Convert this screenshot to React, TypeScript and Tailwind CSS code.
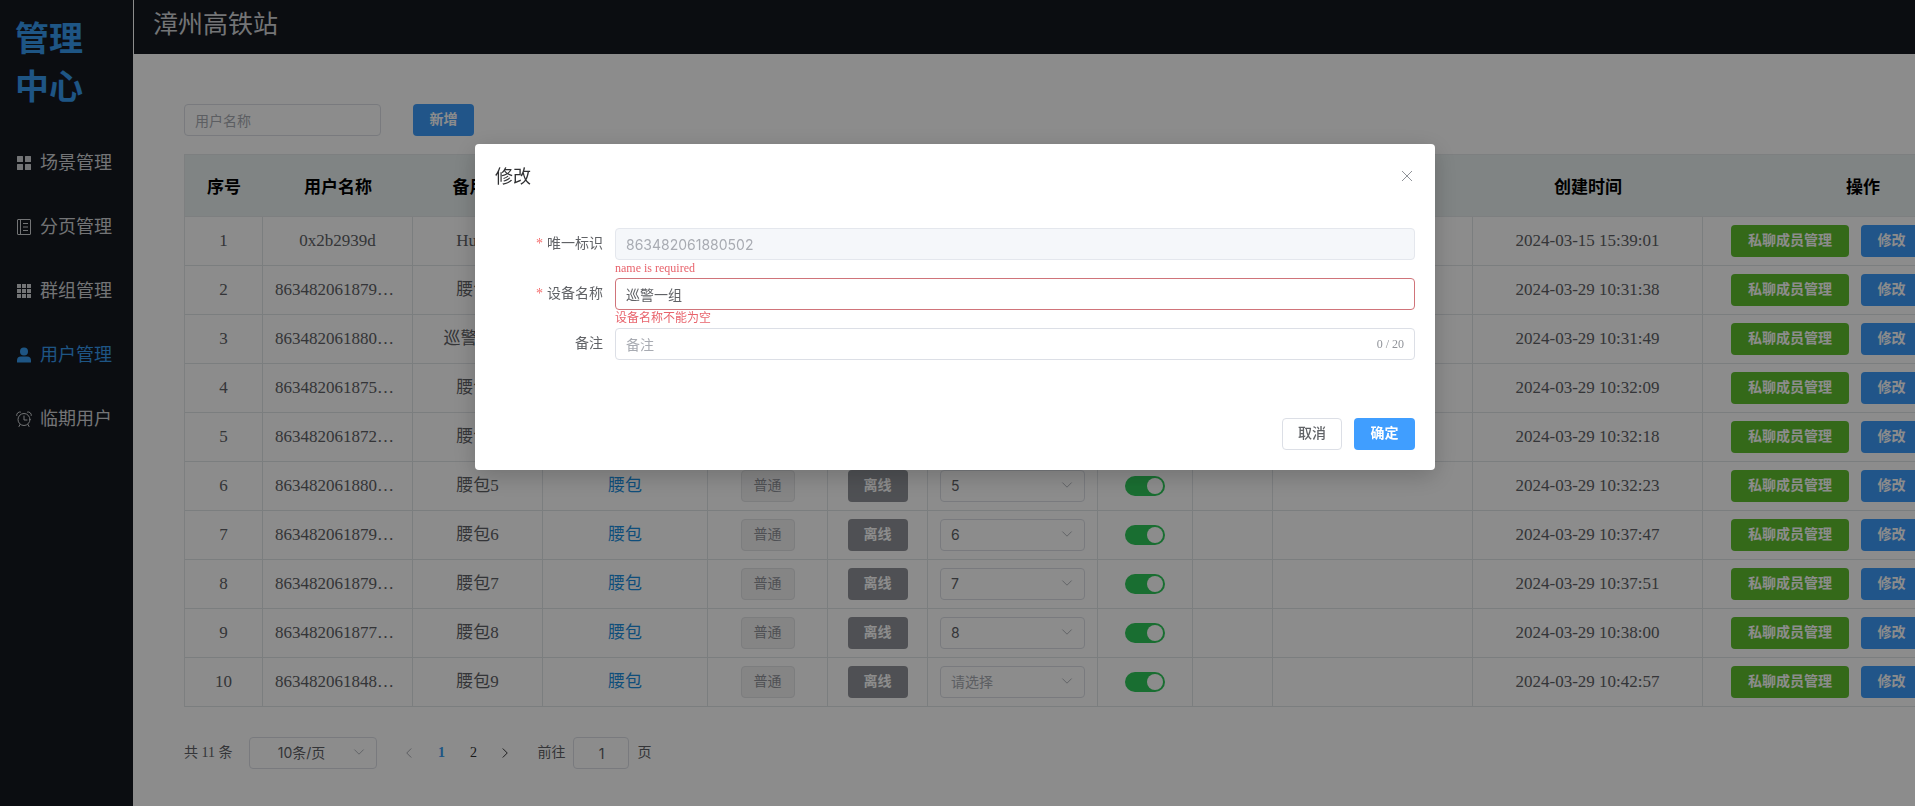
import { useState } from "react";
import type { ReactNode } from "react";

const serif = "font-['Liberation_Serif','Noto_Sans_CJK_SC',serif]";
const sans = "font-['Inter','Noto_Sans_CJK_SC',sans-serif]";

function Svg({ children, className }: { children: ReactNode; className: string }) {
  return (
    <svg viewBox="0 0 16 16" className={className} aria-hidden="true">
      {children}
    </svg>
  );
}

const line = { fill: "none", stroke: "currentColor", strokeWidth: 1 } as const;

const icons = {
  scene: (
    <path
      fill="currentColor"
      d="M1.5 1h5a.5.5 0 0 1 .5.5v5a.5.5 0 0 1-.5.5h-5a.5.5 0 0 1-.5-.5v-5a.5.5 0 0 1 .5-.5zM9.500 1h5a.5.5 0 0 1 .5.5v5a.5.5 0 0 1-.5.5h-5a.5.5 0 0 1-.5-.5v-5a.5.5 0 0 1 .5-.5zM1.500 9h5a.5.5 0 0 1 .5.5v5a.5.5 0 0 1-.5.5h-5a.5.5 0 0 1-.5-.5v-5a.5.5 0 0 1 .5-.5zM9.500 9h5a.5.5 0 0 1 .5.5v5a.5.5 0 0 1-.5.5h-5a.5.5 0 0 1-.5-.5v-5a.5.5 0 0 1 .5-.5z"
    />
  ),
  pages: (
    <g {...line}>
      <rect x="1.500" y="0.500" width="13" height="15" rx="0.500" />
      <path d="M4.500 .5v15M7 4.500h5M7 8h5M7 11.500h5" />
    </g>
  ),
  groups: (
    <path
      fill="currentColor"
      d="M1 1h4v4H1zM6 1h4v4H6zM11 1h4v4h-4zM1 6h4v4H1zM6 6h4v4H6zM11 6h4v4h-4zM1 11h4v4H1zM6 11h4v4H6zM11 11h4v4h-4z"
    />
  ),
  users: (
    <g fill="currentColor">
      <circle cx="8" cy="4.500" r="4" />
      <path d="M1 15v-1.500a4 4 0 0 1 4-4h6a4 4 0 0 1 4 4V15a.5.5 0 0 1-.5.5h-13A.5.5 0 0 1 1 15z" />
    </g>
  ),
  expiring: (
    <g {...line} strokeLinecap="round">
      <circle cx="8" cy="8.500" r="6" />
      <path d="M8 5v4h3M4 13.500l-1 2M12 13.500l1 2M.7 4.500A3 3 0 0 1 4.500 1M15.300 4.500A3 3 0 0 0 11.500 1" />
    </g>
  ),
};

const menu: { label: string; icon: keyof typeof icons; active?: boolean }[] = [
  { label: "场景管理", icon: "scene" },
  { label: "分页管理", icon: "pages" },
  { label: "群组管理", icon: "groups" },
  { label: "用户管理", icon: "users", active: true },
  { label: "临期用户", icon: "expiring" },
];

const columns = [
  { title: "序号", width: "w-[78px]" },
  { title: "用户名称", width: "w-[150px]" },
  { title: "备用名", width: "w-[130px]" },
  { title: "类型", width: "w-[165px]" },
  { title: "级别", width: "w-[120px]" },
  { title: "状态", width: "w-[100px]" },
  { title: "优先级", width: "w-[170px]" },
  { title: "启用", width: "w-[95px]" },
  { title: "分组", width: "w-[80px]" },
  { title: "备注", width: "w-[200px]" },
  { title: "创建时间", width: "w-[230px]" },
  { title: "操作", width: "w-[320px]" },
];

const rows = [
  { user: "0x2b2939d", name: "Hubin", level: "", time: "2024-03-15 15:39:01" },
  { user: "863482061879…", name: "腰包1", level: "1", time: "2024-03-29 10:31:38" },
  { user: "863482061880…", name: "巡警一组", level: "2", time: "2024-03-29 10:31:49" },
  { user: "863482061875…", name: "腰包3", level: "3", time: "2024-03-29 10:32:09" },
  { user: "863482061872…", name: "腰包4", level: "4", time: "2024-03-29 10:32:18" },
  { user: "863482061880…", name: "腰包5", level: "5", time: "2024-03-29 10:32:23" },
  { user: "863482061879…", name: "腰包6", level: "6", time: "2024-03-29 10:37:47" },
  { user: "863482061879…", name: "腰包7", level: "7", time: "2024-03-29 10:37:51" },
  { user: "863482061877…", name: "腰包8", level: "8", time: "2024-03-29 10:38:00" },
  { user: "863482061848…", name: "腰包9", level: "", time: "2024-03-29 10:42:57" },
];

function Chevron({ d }: { d: string }) {
  return (
    <Svg className="size-3.5">
      <path d={d} {...line} strokeLinecap="round" />
    </Svg>
  );
}

const down = "M3 5.500l5 5 5-5";

function LevelSelect({ row, value }: { row: number; value: string }) {
  return (
    <div className="relative mx-3">
      <select
        aria-label={`优先级 ${row}`}
        defaultValue={value}
        className={`${sans} block h-8 w-full appearance-none rounded border border-[#dcdfe6] bg-white px-2.5 text-sm ${value ? "text-[#606266]" : "text-[#a8abb2]"}`}
      >
        <option value="">请选择</option>
        {["1", "2", "3", "4", "5", "6", "7", "8"].map((n) => (
          <option key={n}>{n}</option>
        ))}
      </select>
      <span className="pointer-events-none absolute top-2 right-[11px] text-[#a8abb2]">
        <Chevron d={down} />
      </span>
    </div>
  );
}

function Sidebar() {
  return (
    <aside className="w-[134px] shrink-0 border-r border-white bg-[#15191f]">
      <h1 className="px-[15px] pt-4 text-[34px] leading-[48px] font-bold text-[#389bf0]">
        管理
        <br />
        中心
      </h1>
      <nav className="pt-[19px]">
        {menu.map((item) => (
          <a
            key={item.label}
            href="#"
            className={`flex h-16 items-center gap-2 pl-4 text-lg whitespace-nowrap ${item.active ? "text-[#389bf0]" : "text-[#d2d4d8]"}`}
          >
            <Svg className="size-4">{icons[item.icon]}</Svg>
            {item.label}
          </a>
        ))}
      </nav>
    </aside>
  );
}

function UserTable() {
  return (
    <table className="mt-[18px] w-[1838px] table-fixed border-separate border-spacing-0 border-t border-l border-[#e4e8ea] text-center text-[17px] text-[#606266]">
      <thead>
        <tr className="h-[62px] bg-[#e9f0f0] text-black">
          {columns.map((c) => (
            <th key={c.title} className={`${c.width} border-b border-[#e4e8ea] p-0 pt-1 font-bold`}>
              {c.title}
            </th>
          ))}
        </tr>
      </thead>
      <tbody className="[&_td]:h-[49px] [&_td]:border-r [&_td]:border-b [&_td]:border-[#e1e5e8]">
        {rows.map((r, i) => (
          <tr key={r.time}>
            <td className="p-0">{i + 1}</td>
            <td className={i === 0 ? "p-0" : "p-0 pr-1.5"}>{r.user}</td>
            <td className="p-0">{r.name}</td>
            <td className="p-0">
              <a href="#" className="text-[#1c8fe0]">
                腰包
              </a>
            </td>
            <td className="p-0">
              <span className="inline-flex h-8 items-center rounded border border-[#e2e3e5] bg-[#f2f2f3] px-3 align-middle text-sm text-[#909399]">
                普通
              </span>
            </td>
            <td className="p-0">
              <button className="h-8 rounded bg-[#909399] px-4 align-middle text-sm font-bold text-white">
                离线
              </button>
            </td>
            <td className="p-0">
              <LevelSelect row={i + 1} value={r.level} />
            </td>
            <td className="p-0">
              <input
                type="checkbox"
                defaultChecked
                aria-label={`启用 ${i + 1}`}
                className="mx-auto flex h-5 w-10 appearance-none items-center rounded-full bg-[#c0c4cc] p-0.5 before:size-4 before:rounded-full before:bg-white checked:justify-end checked:bg-[#2fc85a]"
              />
            </td>
            <td className="p-0" />
            <td className="p-0" />
            <td className="p-0">{r.time}</td>
            <td className="p-0">
              <div className="flex gap-3 pl-7 text-sm font-bold text-white">
                <button className="h-8 w-[118px] rounded bg-[#5fc02f]">私聊成员管理</button>
                <button className="h-8 w-[61px] rounded bg-[#3d9bfa]">修改</button>
              </div>
            </td>
          </tr>
        ))}
      </tbody>
    </table>
  );
}

function Pagination() {
  return (
    <nav aria-label="分页" className="mt-[30px] flex h-8 items-center text-sm text-[#606266]">
      <span>共 11 条</span>
      <div className="relative ml-[17px]">
        <select
          aria-label="每页条数"
          className={`${sans} block h-8 w-32 appearance-none rounded border border-[#dcdfe6] bg-white pr-6 text-center text-sm [text-align-last:center]`}
        >
          <option>10条/页</option>
        </select>
        <span className="pointer-events-none absolute top-2 right-[11px] text-[#a8abb2]">
          <Chevron d={down} />
        </span>
      </div>
      <div className="ml-4 flex">
        <button aria-label="上一页" disabled className="flex size-8 items-center justify-center text-[#a8abb2]">
          <Svg className="size-3">
            <path d="M11 2L5 8l6 6" {...line} strokeWidth={1.300} />
          </Svg>
        </button>
        <button className="size-8 font-bold text-[#389bf0]">1</button>
        <button className="size-8 text-[#303133]">2</button>
        <button aria-label="下一页" className="flex size-8 items-center justify-center text-[#303133]">
          <Svg className="size-3">
            <path d="M5 2l6 6-6 6" {...line} strokeWidth={1.300} />
          </Svg>
        </button>
      </div>
      <label className="ml-4 flex items-center gap-2">
        前往
        <input
          defaultValue="1"
          className={`${sans} h-8 w-14 rounded border border-[#dcdfe6] bg-white text-center text-sm`}
        />
        页
      </label>
    </nav>
  );
}

function Field({
  id,
  label,
  required,
  error,
  children,
}: {
  id: string;
  label: string;
  required?: boolean;
  error?: string;
  children: ReactNode;
}) {
  return (
    <div className="flex">
      <label htmlFor={id} className="w-[120px] shrink-0 pr-3 text-right text-sm leading-8 text-[#606266]">
        {required && <span className="mr-1 text-[#f56c6c]">*</span>}
        {label}
      </label>
      <div className="min-w-0 flex-1">
        {children}
        <p className="h-[18px] text-xs leading-4 text-[#e8636c]">{error}</p>
      </div>
    </div>
  );
}

const inputBase = `${sans} block h-8 w-full rounded border px-2.5 text-sm`;

function EditDialog({ onClose }: { onClose: () => void }) {
  return (
    <div className="fixed inset-0 flex items-start justify-center bg-black/45 pt-36 pr-[5px]">
      <div
        role="dialog"
        aria-label="修改"
        className="w-[960px] rounded-sm bg-white p-5 shadow-[0_6px_24px_rgba(0,0,0,0.2)]"
      >
        <div className="flex h-6 items-center justify-between">
          <h2 className="pt-0.5 text-lg text-[#303133]">修改</h2>
          <button aria-label="关闭" onClick={onClose} className="text-[#909399]">
            <Svg className="size-4">
              <path d="M3 3l10 10M13 3L3 13" {...line} />
            </Svg>
          </button>
        </div>
        <form className="pt-10 pb-10">
          <Field id="uid" label="唯一标识" required error="name is required">
            <input
              id="uid"
              disabled
              defaultValue="863482061880502"
              className={`${inputBase} border-[#e4e7ed] bg-[#f5f7fa] text-[#a8abb2]`}
            />
          </Field>
          <Field id="device" label="设备名称" required error="设备名称不能为空">
            <input id="device" defaultValue="巡警一组" className={`${inputBase} border-[#d0747a] text-[#606266]`} />
          </Field>
          <Field id="remark" label="备注">
            <div className="flex items-center rounded border border-[#dcdfe6] pr-2.5">
              <input
                id="remark"
                placeholder="备注"
                maxLength={20}
                className={`${sans} h-[30px] min-w-0 flex-1 px-2.5 text-sm outline-none placeholder:text-[#a8abb2]`}
              />
              <span className="text-xs text-[#909399]">0 / 20</span>
            </div>
          </Field>
        </form>
        <div className="flex justify-end gap-3 text-sm">
          <button onClick={onClose} className="h-8 w-[60px] rounded border border-[#dcdfe6] font-medium text-[#606266]">
            取消
          </button>
          <button className="h-8 w-[61px] rounded bg-[#409eff] font-bold text-white">确定</button>
        </div>
      </div>
    </div>
  );
}

export default function App() {
  const [open, setOpen] = useState(true);
  return (
    <div className={`${serif} flex min-h-screen overflow-hidden bg-white`}>
      <Sidebar />
      <div className="min-w-0 flex-1">
        <header className="flex h-[54px] items-center bg-[#15191f] px-[19px] pb-1 text-[25px] text-[#d2d4d8]">
          漳州高铁站
        </header>
        <main className="overflow-hidden pt-[50px] pl-[50px]">
          <div className="flex gap-8">
            <input
              aria-label="用户名称"
              placeholder="用户名称"
              className={`${sans} h-8 w-[197px] rounded border border-[#dcdfe6] px-2.5 text-sm placeholder:text-[#a8abb2]`}
            />
            <button className="h-8 w-[61px] rounded bg-[#3d9bfa] text-sm font-bold text-white">新增</button>
          </div>
          <UserTable />
          <Pagination />
        </main>
      </div>
      {open && <EditDialog onClose={() => setOpen(false)} />}
    </div>
  );
}
